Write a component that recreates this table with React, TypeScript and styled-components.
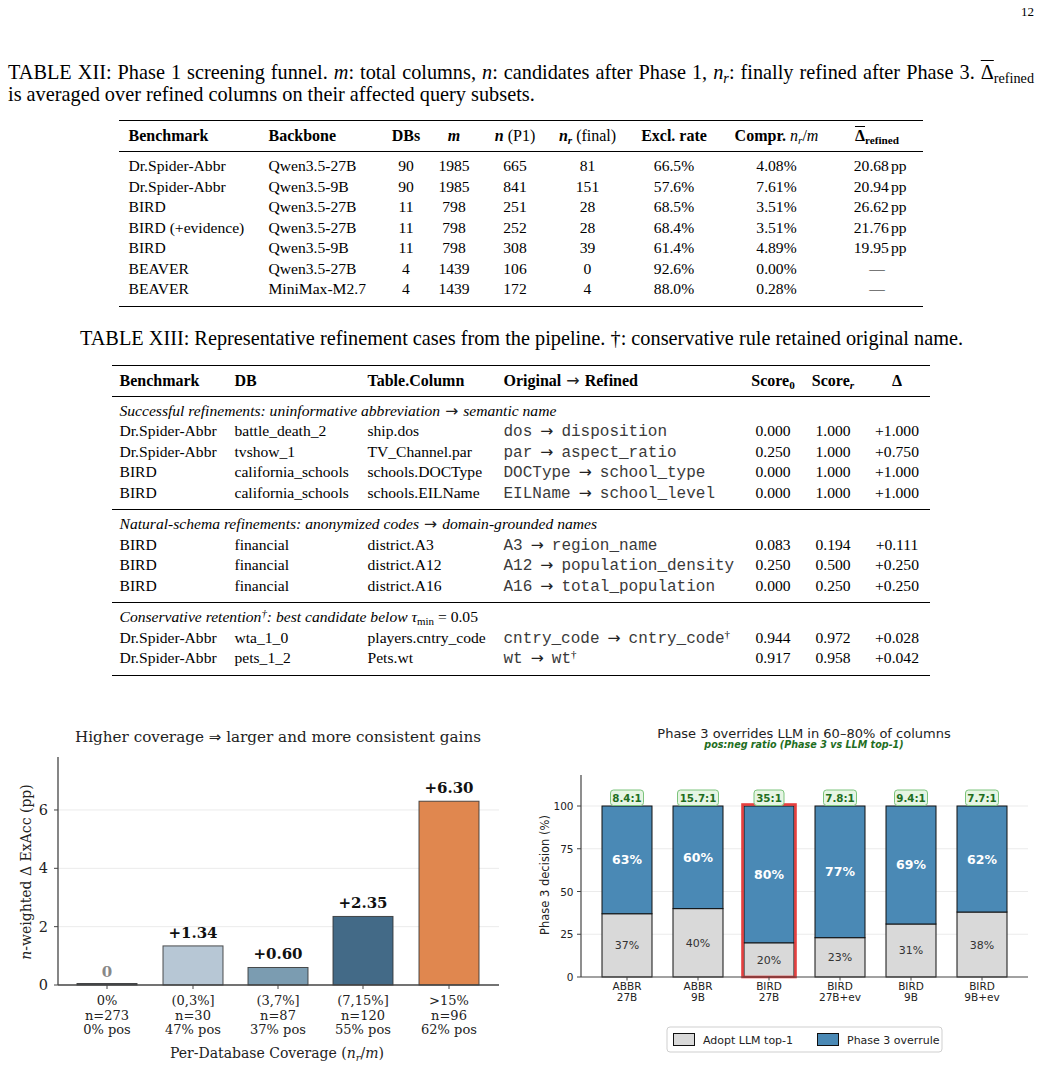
import React from 'react';
import styled, { createGlobalStyle } from 'styled-components';

const GlobalStyle = createGlobalStyle`
  html, body {
    margin: 0;
    padding: 0;
    background: #fff;
  }
  body {
    font-family: "Liberation Serif", "Times New Roman", serif;
    color: #000;
  }
`;

// Page
const Page = styled.div`
  width: 1041px;
  height: 1069px;
  overflow: hidden;
  padding-top: 4px;
  box-sizing: border-box;
`;

const PageNumber = styled.div`
  text-align: right;
  padding-right: 7px;
  font-size: 13px;
  line-height: 16px;
`;

const Caption = styled.div<{ $top: number }>`
  margin: ${p => p.$top}px 7px 0 8px;
  font-size: 20.3px;
  line-height: 22px;
  text-align: justify;
`;

const FullLine = styled.span`
  display: block;
  text-align: justify;
  text-align-last: justify;
  white-space: nowrap;
`;

const CenterCaption = styled.div<{ $top: number }>`
  margin-top: ${p => p.$top}px;
  font-size: 20.3px;
  line-height: 22px;
  text-align: center;
  padding-left: 2px;
  white-space: nowrap;
`;

const M = styled.i`
  font-style: italic;
`;

const BM = styled.i`
  font-style: italic;
  font-weight: bold;
`;

const Light = styled.span`
  font-weight: normal;
`;

const Upright = styled.span`
  font-style: normal;
`;

const Sub = styled.sub<{ $italic?: boolean }>`
  font-size: 0.7em;
  font-style: ${p => (p.$italic ? 'italic' : 'normal')};
  vertical-align: -0.25em;
  line-height: 0;
`;

const Over = styled.span`
  text-decoration: overline;
  text-decoration-thickness: 1px;
`;

const Dagger = styled.sup`
  font-size: 0.7em;
  vertical-align: 0.45em;
  line-height: 0;
  font-family: "Liberation Serif", serif;
`;

const Arrow = styled.span<{ $gap?: number }>`
  font-family: "DejaVu Sans", sans-serif;
  font-style: normal;
  font-weight: normal;
  font-size: 1em;
  line-height: 1;
  color: #222;
  margin: 0 ${p => p.$gap ?? 5}px;
`;

// Tables
const Table = styled.table<{ $w: number; $top: number }>`
  width: ${p => p.$w}px;
  margin: ${p => p.$top}px auto 0 auto;
  border-collapse: collapse;
  table-layout: fixed;
  font-size: 15.6px;
  border-top: 1.6px solid #000;
  border-bottom: 1.6px solid #000;
`;

const Col = styled.col<{ $w: number }>`
  width: ${p => p.$w}px;
`;

const Th = styled.th<{ $align?: string; $pl?: number }>`
  height: 30px;
  padding: 0 0 0 ${p => p.$pl ?? 0}px;
  text-align: ${p => p.$align ?? 'center'};
  font-size: 16px;
  font-weight: bold;
  border-bottom: 1px solid #000;
  white-space: nowrap;
`;

const Body = styled.tbody`
  & tr:first-child td {
    padding-top: 4px;
  }
  & tr:last-child td {
    padding-bottom: 6px;
  }
  & + & tr:first-child td {
    border-top: 1.1px solid #000;
  }
`;

const Td = styled.td<{ $align?: string; $pl?: number; $pr?: number }>`
  padding: 0 ${p => p.$pr ?? 0}px 0 ${p => p.$pl ?? 0}px;
  height: 20.5px;
  line-height: 20.5px;
  text-align: ${p => p.$align ?? 'center'};
  white-space: nowrap;
  overflow: visible;
`;

const SectionTd = styled.td`
  padding: 0 0 0 8px;
  height: 20.5px;
  line-height: 20.5px;
  font-style: italic;
  white-space: nowrap;
`;

const Mono = styled.span`
  font-family: "Liberation Mono", "Courier New", monospace;
  font-size: 16px;
  line-height: 1;
  color: #3a3a3a;
`;

const Unit = styled.span`
  margin-left: 2px;
`;

// Figures
const FigureRow = styled.div`
  display: flex;
  margin-top: 44px;
`;

const ChartSvg = styled.svg<{ $font: string }>`
  display: block;
  flex: none;
  text {
    font-family: ${p => p.$font};
  }
`;

const funnel = [
  ['Dr.Spider-Abbr', 'Qwen3.5-27B', '90', '1985', '665', '81', '66.5%', '4.08%', '20.68'],
  ['Dr.Spider-Abbr', 'Qwen3.5-9B', '90', '1985', '841', '151', '57.6%', '7.61%', '20.94'],
  ['BIRD', 'Qwen3.5-27B', '11', '798', '251', '28', '68.5%', '3.51%', '26.62'],
  ['BIRD (+evidence)', 'Qwen3.5-27B', '11', '798', '252', '28', '68.4%', '3.51%', '21.76'],
  ['BIRD', 'Qwen3.5-9B', '11', '798', '308', '39', '61.4%', '4.89%', '19.95'],
  ['BEAVER', 'Qwen3.5-27B', '4', '1439', '106', '0', '92.6%', '0.00%', ''],
  ['BEAVER', 'MiniMax-M2.7', '4', '1439', '172', '4', '88.0%', '0.28%', ''],
];

type CaseRow = {
  bench: string;
  db: string;
  col: string;
  from: string;
  to: string;
  kept?: boolean;
  s0: string;
  sr: string;
  d: string;
};

const sections: { title: React.ReactNode; rows: CaseRow[] }[] = [
  {
    title: <>Successful refinements: uninformative abbreviation<Arrow>→</Arrow>semantic name</>,
    rows: [
      { bench: 'Dr.Spider-Abbr', db: 'battle_death_2', col: 'ship.dos', from: 'dos', to: 'disposition', s0: '0.000', sr: '1.000', d: '+1.000' },
      { bench: 'Dr.Spider-Abbr', db: 'tvshow_1', col: 'TV_Channel.par', from: 'par', to: 'aspect_ratio', s0: '0.250', sr: '1.000', d: '+0.750' },
      { bench: 'BIRD', db: 'california_schools', col: 'schools.DOCType', from: 'DOCType', to: 'school_type', s0: '0.000', sr: '1.000', d: '+1.000' },
      { bench: 'BIRD', db: 'california_schools', col: 'schools.EILName', from: 'EILName', to: 'school_level', s0: '0.000', sr: '1.000', d: '+1.000' },
    ],
  },
  {
    title: <>Natural-schema refinements: anonymized codes<Arrow>→</Arrow>domain-grounded names</>,
    rows: [
      { bench: 'BIRD', db: 'financial', col: 'district.A3', from: 'A3', to: 'region_name', s0: '0.083', sr: '0.194', d: '+0.111' },
      { bench: 'BIRD', db: 'financial', col: 'district.A12', from: 'A12', to: 'population_density', s0: '0.250', sr: '0.500', d: '+0.250' },
      { bench: 'BIRD', db: 'financial', col: 'district.A16', from: 'A16', to: 'total_population', s0: '0.000', sr: '0.250', d: '+0.250' },
    ],
  },
  {
    title: (
      <>
        Conservative retention<Dagger>†</Dagger>: best candidate below <M>τ</M>
        <Sub>min</Sub> <Upright>= 0.05</Upright>
      </>
    ),
    rows: [
      { bench: 'Dr.Spider-Abbr', db: 'wta_1_0', col: 'players.cntry_code', from: 'cntry_code', to: 'cntry_code', kept: true, s0: '0.944', sr: '0.972', d: '+0.028' },
      { bench: 'Dr.Spider-Abbr', db: 'pets_1_2', col: 'Pets.wt', from: 'wt', to: 'wt', kept: true, s0: '0.917', sr: '0.958', d: '+0.042' },
    ],
  },
];

// Left chart: coverage buckets
const coverage = [
  { cat: '0%', n: 'n=273', pos: '0% pos', v: 0, fill: '#4d5d6b', text: '0' },
  { cat: '(0,3%]', n: 'n=30', pos: '47% pos', v: 1.34, fill: '#b7c7d5', text: '+1.34' },
  { cat: '(3,7%]', n: 'n=87', pos: '37% pos', v: 0.6, fill: '#7b9cb1', text: '+0.60' },
  { cat: '(7,15%]', n: 'n=120', pos: '55% pos', v: 2.35, fill: '#436a87', text: '+2.35' },
  { cat: '>15%', n: 'n=96', pos: '62% pos', v: 6.3, fill: '#e0874f', text: '+6.30' },
];

const CoverageChart: React.FC = () => {
  const x0 = 58;
  const y0 = 265;
  const unit = 29.17;
  const centers = [107, 193, 278, 363, 449];
  return (
    <ChartSvg $font={'"DejaVu Serif", serif'} width={520} height={349} viewBox="0 0 520 349">
      <text x={278} y={22} fontSize={15.2} textAnchor="middle" fill="#222">
        Higher coverage <tspan fontFamily='"DejaVu Sans", sans-serif' fontSize={15}>⇒</tspan> larger and more consistent gains
      </text>
      {[2, 4, 6].map(t => (
        <line key={t} x1={x0} x2={499} y1={y0 - t * unit} y2={y0 - t * unit} stroke="#ebebeb" strokeWidth={1} />
      ))}
      {[0, 2, 4, 6].map(t => (
        <g key={t}>
          <line x1={x0 - 4} x2={x0} y1={y0 - t * unit} y2={y0 - t * unit} stroke="#444" strokeWidth={1} />
          <text x={48} y={y0 - t * unit + 5} fontSize={14.5} textAnchor="end" fill="#222">
            {t}
          </text>
        </g>
      ))}
      {coverage.map((b, i) => {
        const cx = centers[i];
        const h = b.v * unit;
        return (
          <g key={b.cat}>
            <rect
              x={cx - 30}
              y={y0 - Math.max(h, 1.5)}
              width={60}
              height={Math.max(h, 1.5)}
              fill={b.fill}
              stroke="#333"
              strokeOpacity={0.85}
              strokeWidth={1}
            />
            <text
              x={cx}
              y={y0 - h - 8}
              fontSize={15}
              fontWeight="bold"
              textAnchor="middle"
              fill={i === 0 ? '#888' : '#111'}
            >
              {b.text}
            </text>
            <line x1={cx} x2={cx} y1={y0} y2={y0 + 4} stroke="#444" strokeWidth={1} />
            <text x={cx} y={285} fontSize={13} textAnchor="middle" fill="#222">{b.cat}</text>
            <text x={cx} y={299.5} fontSize={13} textAnchor="middle" fill="#222">{b.n}</text>
            <text x={cx} y={314} fontSize={13} textAnchor="middle" fill="#222">{b.pos}</text>
          </g>
        );
      })}
      <line x1={x0} x2={x0} y1={37} y2={y0} stroke="#444" strokeWidth={1.3} />
      <line x1={x0} x2={499} y1={y0} y2={y0} stroke="#444" strokeWidth={1.3} />
      <text x={277} y={338} fontSize={14} textAnchor="middle" fill="#222">
        Per-Database Coverage (<tspan fontStyle="italic">n</tspan>
        <tspan fontStyle="italic" fontSize={10} dy={3}>r</tspan>
        <tspan dy={-3}>/</tspan>
        <tspan fontStyle="italic">m</tspan>)
      </text>
      <text x={26} y={152} fontSize={14} textAnchor="middle" fill="#222" transform="rotate(-90 26 152)" dy={5}>
        <tspan fontStyle="italic">n</tspan>-weighted Δ ExAcc (pp)
      </text>
    </ChartSvg>
  );
};

// Right chart: Phase 3 decisions
const decisions = [
  { top: 'ABBR', bottom: '27B', adopt: 37, ratio: '8.4:1', w: 33 },
  { top: 'ABBR', bottom: '9B', adopt: 40, ratio: '15.7:1', w: 41 },
  { top: 'BIRD', bottom: '27B', adopt: 20, ratio: '35:1', w: 30, hot: true },
  { top: 'BIRD', bottom: '27B+ev', adopt: 23, ratio: '7.8:1', w: 33 },
  { top: 'BIRD', bottom: '9B', adopt: 31, ratio: '9.4:1', w: 33 },
  { top: 'BIRD', bottom: '9B+ev', adopt: 38, ratio: '7.7:1', w: 33 },
];

const DecisionChart: React.FC = () => {
  const x0 = 61;
  const y0 = 257;
  const unit = 1.71;
  const centers = [107, 178, 249, 320, 391, 462];
  const green = '#1f6e1f';
  return (
    <ChartSvg $font={'"DejaVu Sans", sans-serif'} width={521} height={349} viewBox="0 0 521 349">
      <text x={284} y={17.5} fontSize={13} textAnchor="middle" fill="#222">
        Phase 3 overrides LLM in 60–80% of columns
      </text>
      <text x={284} y={28} fontSize={9.6} fontWeight="bold" fontStyle="italic" textAnchor="middle" fill={green}>
        pos:neg ratio (Phase 3 vs LLM top-1)
      </text>
      {[25, 50, 75, 100].map(t => (
        <line key={t} x1={x0} x2={508} y1={y0 - t * unit} y2={y0 - t * unit} stroke="#ebebeb" strokeWidth={1} />
      ))}
      {[0, 25, 50, 75, 100].map(t => (
        <g key={t}>
          <line x1={x0 - 4} x2={x0} y1={y0 - t * unit} y2={y0 - t * unit} stroke="#444" strokeWidth={1} />
          <text x={53.5} y={y0 - t * unit + 4} fontSize={10.5} textAnchor="end" fill="#222">
            {t}
          </text>
        </g>
      ))}
      {decisions.map((d, i) => {
        const cx = centers[i];
        const split = y0 - d.adopt * unit;
        const top = y0 - 100 * unit;
        return (
          <g key={i}>
            <rect x={cx - 25} y={split} width={50} height={y0 - split} fill="#d9d9d9" stroke="#111" strokeWidth={1} />
            <rect x={cx - 25} y={top} width={50} height={split - top} fill="#4a89b5" stroke="#111" strokeWidth={1} />
            <text x={cx} y={(split + y0) / 2 + 4} fontSize={11} textAnchor="middle" fill="#333">
              {d.adopt}%
            </text>
            <text x={cx} y={(split + top) / 2 + 4.5} fontSize={12.5} fontWeight="bold" textAnchor="middle" fill="#fff">
              {100 - d.adopt}%
            </text>
            {d.hot && (
              <rect x={cx - 26.5} y={top - 1.5} width={53} height={y0 - top + 1.5} fill="none" stroke="#e32b2b" strokeWidth={2.6} strokeOpacity={0.9} />
            )}
            <rect x={cx - d.w / 2} y={70} width={d.w} height={15.5} rx={3} fill="#e6f5e4" stroke="#7cc47c" strokeWidth={1} />
            <text x={cx} y={81.5} fontSize={10.3} fontWeight="bold" textAnchor="middle" fill={green}>
              {d.ratio}
            </text>
            <line x1={cx} x2={cx} y1={y0} y2={y0 + 3.5} stroke="#444" strokeWidth={1} />
            <text x={cx} y={269.5} fontSize={10.5} textAnchor="middle" fill="#222">{d.top}</text>
            <text x={cx} y={280.5} fontSize={10.5} textAnchor="middle" fill="#222">{d.bottom}</text>
          </g>
        );
      })}
      <line x1={x0} x2={x0} y1={55} y2={y0} stroke="#444" strokeWidth={1.2} />
      <line x1={x0} x2={508} y1={y0} y2={y0} stroke="#444" strokeWidth={1.2} />
      <text x={25} y={155} fontSize={11.5} textAnchor="middle" fill="#222" transform="rotate(-90 25 155)" dy={4}>
        Phase 3 decision (%)
      </text>
      <rect x={147} y={307} width={275} height={25} rx={3} fill="#fff" stroke="#cfcfcf" strokeWidth={1} />
      <rect x={153.5} y={313.5} width={21} height={12} fill="#d9d9d9" stroke="#111" strokeWidth={1} />
      <text x={183} y={323.5} fontSize={11} fill="#222">Adopt LLM top-1</text>
      <rect x={297.5} y={313.5} width={21} height={12} fill="#4a89b5" stroke="#111" strokeWidth={1} />
      <text x={327} y={323.5} fontSize={11} fill="#222">Phase 3 overrule</text>
    </ChartSvg>
  );
};

const App: React.FC = () => {
  return (
    <Page>
      <GlobalStyle />
      <PageNumber>12</PageNumber>

      <Caption $top={41}>
        <FullLine>
          TABLE XII: Phase 1 screening funnel. <M>m</M>: total columns, <M>n</M>: candidates after Phase 1,{' '}
          <M>n</M>
          <Sub $italic>r</Sub>: finally refined after Phase 3. <Over>Δ</Over>
          <Sub>refined</Sub>
        </FullLine>
        is averaged over refined columns on their affected query subsets.
      </Caption>

      <Table $w={804} $top={15}>
        <colgroup>
          <Col $w={140} />
          <Col $w={127} />
          <Col $w={41} />
          <Col $w={55} />
          <Col $w={67} />
          <Col $w={78} />
          <Col $w={95} />
          <Col $w={110} />
          <Col $w={91} />
        </colgroup>
        <thead>
          <tr>
            <Th $align="left" $pl={10}>Benchmark</Th>
            <Th $align="left" $pl={10}>Backbone</Th>
            <Th>DBs</Th>
            <Th><BM>m</BM></Th>
            <Th><BM>n</BM> <Light>(P1)</Light></Th>
            <Th>
              <BM>n</BM>
              <Sub $italic>r</Sub> <Light>(final)</Light>
            </Th>
            <Th>Excl. rate</Th>
            <Th>
              Compr. <Light><M>n</M><Sub $italic>r</Sub>/<M>m</M></Light>
            </Th>
            <Th>
              <Over>Δ</Over>
              <Sub>refined</Sub>
            </Th>
          </tr>
        </thead>
        <Body>
          {funnel.map((r, i) => (
            <tr key={i}>
              <Td $align="left" $pl={10}>{r[0]}</Td>
              <Td $align="left" $pl={10}>{r[1]}</Td>
              <Td>{r[2]}</Td>
              <Td>{r[3]}</Td>
              <Td>{r[4]}</Td>
              <Td>{r[5]}</Td>
              <Td>{r[6]}</Td>
              <Td>{r[7]}</Td>
              <Td $align={r[8] ? 'right' : 'center'} $pr={r[8] ? 16 : 0}>
                {r[8] ? (
                  <>
                    {r[8]}
                    <Unit>pp</Unit>
                  </>
                ) : (
                  '—'
                )}
              </Td>
            </tr>
          ))}
        </Body>
      </Table>

      <CenterCaption $top={20}>
        TABLE XIII: Representative refinement cases from the pipeline. †: conservative rule retained original name.
      </CenterCaption>

      <Table $w={818} $top={16}>
        <colgroup>
          <Col $w={115} />
          <Col $w={133} />
          <Col $w={136} />
          <Col $w={249} />
          <Col $w={57} />
          <Col $w={63} />
          <Col $w={65} />
        </colgroup>
        <thead>
          <tr>
            <Th $align="left" $pl={8}>Benchmark</Th>
            <Th $align="left" $pl={8}>DB</Th>
            <Th $align="left" $pl={8}>Table.Column</Th>
            <Th $align="left" $pl={8}>Original<Arrow>→</Arrow>Refined</Th>
            <Th>
              Score<Sub>0</Sub>
            </Th>
            <Th>
              Score<Sub $italic>r</Sub>
            </Th>
            <Th>Δ</Th>
          </tr>
        </thead>
        {sections.map((s, si) => (
          <Body key={si}>
            <tr>
              <SectionTd colSpan={7}>{s.title}</SectionTd>
            </tr>
            {s.rows.map((r, ri) => (
              <tr key={ri}>
                <Td $align="left" $pl={8}>{r.bench}</Td>
                <Td $align="left" $pl={8}>{r.db}</Td>
                <Td $align="left" $pl={8}>{r.col}</Td>
                <Td $align="left" $pl={8}>
                  <Mono>{r.from}</Mono>
                  <Arrow $gap={8}>→</Arrow>
                  <Mono>{r.to}</Mono>
                  {r.kept && <Dagger>†</Dagger>}
                </Td>
                <Td>{r.s0}</Td>
                <Td>{r.sr}</Td>
                <Td>{r.d}</Td>
              </tr>
            ))}
          </Body>
        ))}
      </Table>

      <FigureRow>
        <CoverageChart />
        <DecisionChart />
      </FigureRow>
    </Page>
  );
};

export default App;
